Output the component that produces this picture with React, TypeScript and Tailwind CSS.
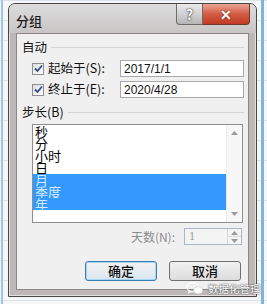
import React from "react";

const CJK = "font-['Microsoft_YaHei','Noto_Sans_CJK_SC',sans-serif]";

function CheckBox() {
  return (
    <div className="flex h-[12px] w-[12px] items-center justify-center border border-[#8e8f8f] bg-gradient-to-br from-[#dcdcdc] to-[#ffffff]">
      <svg width="9" height="9" viewBox="0 0 9 9">
        <path d="M1 4.5 L3.5 7 L8 1.5" fill="none" stroke="#2f4f8f" strokeWidth="1.8" />
      </svg>
    </div>
  );
}

function Arrow({ up }: { up?: boolean }) {
  return (
    <svg width="7" height="4" viewBox="0 0 7 4">
      <path d={up ? "M0 4 L3.5 0 L7 4 Z" : "M0 0 L3.5 4 L7 0 Z"} fill="#9a9a9a" />
    </svg>
  );
}

const items = [
  { t: "秒", s: false },
  { t: "分", s: false },
  { t: "小时", s: false },
  { t: "日", s: false },
  { t: "月", s: true },
  { t: "季度", s: true },
  { t: "年", s: true },
];

export default function App() {
  return (
    <div
      className={`relative h-[304px] w-[267px] overflow-hidden bg-[#f4f6f8] bg-[linear-gradient(to_bottom,#dfe3e8_1px,transparent_1px)] bg-[length:100%_20px] ${CJK}`}
    >
      <div className="absolute left-[1px] top-0 h-full w-[2px] bg-[#9cc6e4]" />
      <div className="absolute right-[3px] top-0 h-full w-[3px] bg-[#7fb4dc]" />

      <div className="flex h-full flex-col pl-[8px] pr-[10px] pt-[3px]">
        <div className="relative flex h-[294px] w-[249px] flex-col rounded-t-[7px] border border-[#4a4646] bg-[#bdb7b7] shadow-[inset_0_0_0_1px_#e4e0e0]">
          {/* title bar */}
          <div className="flex h-[29px] shrink-0 items-start rounded-t-[6px] bg-gradient-to-b from-[#dcdcdc] to-[#c9c5c5]">
            <div className="ml-[7px] mt-[9px] text-[13px] font-medium leading-[16px] text-[#1a1a1a]">分组</div>
            <div className="ml-auto mr-[6px] flex">
              <div className="flex h-[21px] w-[27px] items-center justify-center rounded-bl-[4px] border border-t-0 border-[#6b6b6b] bg-gradient-to-b from-[#ebebeb] via-[#d2d2d2] to-[#b5b5b5] text-[14px] font-bold leading-none text-white [text-shadow:0_0_2px_#333,0_0_1px_#333]">
                ?
              </div>
              <div className="flex h-[21px] w-[47px] items-center justify-center rounded-br-[4px] border border-l-0 border-t-0 border-[#6b3a30] bg-gradient-to-b from-[#e8a595] via-[#d45c44] to-[#c23a22] text-[14px] font-bold leading-none text-white [text-shadow:0_0_2px_#5a1a10]">
                ✕
              </div>
            </div>
          </div>

          {/* client panel */}
          <div className="mx-[7px] mb-[6px] flex flex-1 flex-col border border-[#8d8888] bg-[#f0f0f0] text-[12.5px] text-[#111]">
            <div className="mt-[6px] flex h-[14px] items-center pl-[5px] pr-[4px]">
              <span className="leading-[14px]">自动</span>
              <div className="ml-[4px] h-[1px] flex-1 border-t border-[#d5d5d5] bg-white" />
            </div>

            <div className="mt-[6px] flex h-[17px] items-center pl-[15px]">
              <CheckBox />
              <span className="ml-[4px]">起始于(S):</span>
              <div className="ml-auto mr-[4px] flex h-[17px] w-[124px] items-center border border-[#a9a9a9] bg-white pl-[3px] font-['Liberation_Sans',sans-serif] text-[12px]">
                2017/1/1
              </div>
            </div>
            <div className="mt-[4px] flex h-[17px] items-center pl-[15px]">
              <CheckBox />
              <span className="ml-[4px]">终止于(E):</span>
              <div className="ml-auto mr-[4px] flex h-[17px] w-[124px] items-center border border-[#a9a9a9] bg-white pl-[3px] font-['Liberation_Sans',sans-serif] text-[12px]">
                2020/4/28
              </div>
            </div>

            <div className="mt-[7px] flex h-[14px] items-center pl-[5px] pr-[4px]">
              <span className="leading-[14px]">步长(B)</span>
              <div className="ml-[4px] h-[1px] flex-1 border-t border-[#d5d5d5] bg-white" />
            </div>

            <div className="ml-[15px] mt-[5px] flex h-[99px] w-[211px] border border-[#8e8e8e] bg-white">
              <div className="flex flex-1 flex-col pt-[1px]">
                {items.map((it) => (
                  <div
                    key={it.t}
                    className={`h-[12px] overflow-visible pl-[2px] text-[13px] leading-[12px] ${it.s ? "bg-[#3399ff] text-[#d6ebff]" : "text-black"}`}
                  >
                    {it.t}
                  </div>
                ))}
              </div>
              <div className="flex w-[16px] flex-col items-center justify-between border-l border-[#ececec] bg-[#f7f7f7] py-[6px]">
                <Arrow up />
                <Arrow />
              </div>
            </div>

            <div className="mt-[5px] flex h-[17px] items-center">
              <span className="ml-auto text-[12px] text-[#8d8d8d]">天数(N):</span>
              <div className="ml-[9px] mr-[6px] flex h-[17px] w-[58px] border border-[#aab8c8] bg-[#f4f4f4]">
                <span className="flex-1 pl-[4px] font-['Liberation_Serif',serif] text-[12px] leading-[15px] text-[#9a9a9a]">1</span>
                <div className="flex w-[14px] flex-col border-l border-[#d8d8d8]">
                  <div className="flex flex-1 items-center justify-center border-b border-[#d8d8d8]"><Arrow up /></div>
                  <div className="flex flex-1 items-center justify-center"><Arrow /></div>
                </div>
              </div>
            </div>

            <div className="mt-[16px] flex gap-[12px] pl-[68px]">
              <div className="flex h-[20px] w-[72px] items-center justify-center rounded-[3px] border border-[#3c7fb1] bg-gradient-to-b from-[#f2f2f2] to-[#d9e6ef] text-[13px] font-medium shadow-[inset_0_0_0_1px_#a8d6f2]">
                确定
              </div>
              <div className="flex h-[20px] w-[72px] items-center justify-center rounded-[3px] border border-[#707070] bg-gradient-to-b from-[#f2f2f2] to-[#dcdcdc] text-[13px] font-medium">
                取消
              </div>
            </div>
          </div>
        </div>
      </div>

      {/* watermark */}
      <div className="absolute left-[186px] top-[281px] flex items-center gap-[4px]">
        <svg width="18" height="15" viewBox="0 0 20 16">
          <ellipse cx="7.5" cy="6.5" rx="6.5" ry="5.2" fill="none" stroke="#fff" strokeWidth="1.3" />
          <path d="M3 11 L2 14 L6 11.5" fill="#fff" />
          <ellipse cx="13.5" cy="10" rx="5" ry="4" fill="#fff" stroke="#bbb" strokeWidth="0.6" />
          <circle cx="5" cy="5.5" r="0.9" fill="#fff" />
          <circle cx="9.5" cy="5.5" r="0.9" fill="#fff" />
        </svg>
        <span className="text-[10.5px] leading-[15px] text-white [text-shadow:0_0_2px_#555,0_0_1px_#555]">数据化管理</span>
      </div>
    </div>
  );
}
